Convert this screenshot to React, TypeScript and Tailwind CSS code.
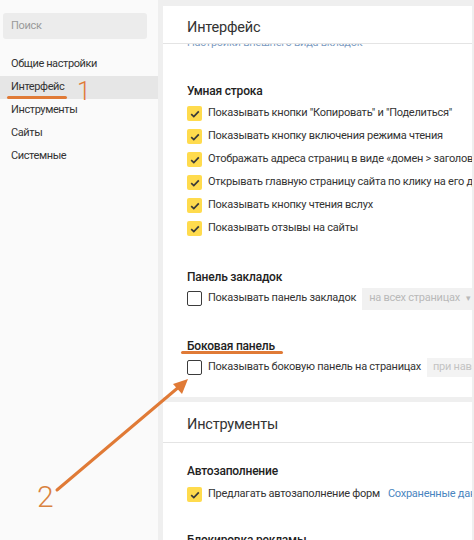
import React from "react";

const font = { fontFamily: 'Roboto, "Noto Sans", sans-serif' };

function Check({ on }: { on: boolean }) {
  if (on)
    return (
      <span className="flex h-[15px] w-[15px] shrink-0 items-center justify-center rounded-[2px] bg-[#ffdb4d]">
        <svg width="10" height="8" viewBox="0 0 10 8">
          <path d="M1.2 4.2 L3.8 6.6 L8.8 1.4" fill="none" stroke="#3a3a3a" strokeWidth="1.7" />
        </svg>
      </span>
    );
  return <span className="h-[15px] w-[15px] shrink-0 rounded-[2px] border-[1.5px] border-[#3b3b3b] bg-white" />;
}

function Row({ on, text, children }: { on: boolean; text: string; children?: React.ReactNode }) {
  return (
    <div className="flex h-[23px] items-center whitespace-nowrap">
      <Check on={on} />
      <span className="ml-[6px] text-[11px] tracking-[-0.25px] text-[#333]">{text}</span>
      {children}
    </div>
  );
}

function SectionTitle({ children, className }: { children: React.ReactNode; className?: string }) {
  return (
    <div
      className={
        "h-[20px] whitespace-nowrap text-[12px] font-medium leading-[20px] tracking-[-0.2px] text-[#222] " + (className || "")
      }
    >
      {children}
    </div>
  );
}

export default function App() {
  const rows = [
    'Показывать кнопки "Копировать" и "Поделиться"',
    "Показывать кнопку включения режима чтения",
    "Отображать адреса страниц в виде «домен > заголовок»",
    "Открывать главную страницу сайта по клику на его домен",
    "Показывать кнопку чтения вслух",
    "Показывать отзывы на сайты",
  ];
  const nav = ["Общие настройки", "Интерфейс", "Инструменты", "Сайты", "Системные"];
  return (
    <div className="relative flex h-[540px] w-[474px] overflow-hidden bg-[#efefef]" style={font}>
      {/* Sidebar */}
      <div className="w-[158px] shrink-0 bg-[#fafafa]">
        <div className="mx-[3px] mt-[13px] flex h-[26px] w-[144px] items-center rounded-[3px] bg-[#ececec] pl-[8px] text-[11px] tracking-[-0.3px] text-[#9a9a9a]">
          Поиск
        </div>
        <div className="mt-[14px] flex flex-col">
          {nav.map((n, i) => (
            <div
              key={n}
              className={
                "flex h-[23px] items-center pl-[11px] text-[11px] tracking-[-0.4px] text-[#333] " +
                (i === 1 ? "bg-[#e6e6e6]" : "")
              }
            >
              {n}
            </div>
          ))}
        </div>
      </div>

      {/* Main */}
      <div className="flex min-w-0 flex-1 flex-col pl-[5px] pr-[2px] pt-[6px]">
        <div className="h-[391px] shrink-0 overflow-hidden bg-white">
          <div className="flex h-[38px] items-center border-b border-[#e4e4e4] pl-[24px] pt-[7px] text-[14.5px] tracking-[-0.2px] text-[#333]">
            Интерфейс
          </div>
          <div className="relative h-[6px] overflow-hidden pl-[24px]">
            <div className="-mt-[8px] whitespace-nowrap text-[11px] leading-[14px] tracking-[-0.25px] text-[#7d9cc2]">
              Настройки внешнего вида вкладок
            </div>
          </div>
          <div className="pl-[24px]">
            <SectionTitle className="mt-[31px]">Умная строка</SectionTitle>
            <div className="mt-[1px]">
              {rows.map((r) => (
                <Row key={r} on text={r} />
              ))}
            </div>
            <SectionTitle className="mt-[27px]">Панель закладок</SectionTitle>
            <Row on={false} text="Показывать панель закладок">
              <span className="ml-[6px] flex h-[22px] items-center bg-[#f1f1f1] pl-[7px] pr-[8px] text-[11px] tracking-[-0.25px] text-[#b9b9b9]">
                на всех страницах <span className="ml-[6px] text-[9px]">▾</span>
              </span>
            </Row>
            <SectionTitle className="mt-[26px]">Боковая панель</SectionTitle>
            <Row on={false} text="Показывать боковую панель на страницах">
              <span className="ml-[6px] flex h-[19px] items-center bg-[#f3f3f3] pl-[6px] pr-[8px] text-[11px] tracking-[-0.25px] text-[#c3c3c3]">
                при наведении
              </span>
            </Row>
          </div>
        </div>

        <div className="mt-[5px] flex-1 overflow-hidden bg-white">
          <div className="flex h-[41px] items-center border-b border-[#e4e4e4] pl-[24px] pt-[6px] text-[14.5px] tracking-[-0.2px] text-[#333]">
            Инструменты
          </div>
          <div className="pl-[24px]">
            <SectionTitle className="mt-[18px]">Автозаполнение</SectionTitle>
            <div className="mt-[2px]">
              <Row on text="Предлагать автозаполнение форм">
                <span className="ml-[8px] text-[11px] tracking-[-0.25px] text-[#4a85c0]">Сохраненные данные</span>
              </Row>
            </div>
            <SectionTitle className="mt-[24px]">Блокировка рекламы</SectionTitle>
          </div>
        </div>
      </div>

      {/* Annotations */}
      <div className="absolute left-[7px] top-[96px] h-[3px] w-[60px] rounded-full bg-[#e07a36]" />
      <div className="absolute left-[77px] top-[78px] text-[25px] font-light leading-[28px] text-[#e07a36]">1</div>
      <div className="absolute left-[181px] top-[351px] h-[3px] w-[102px] rounded-full bg-[#e07a36]" />
      <svg className="absolute left-0 top-0" width="474" height="540" viewBox="0 0 474 540">
        <line x1="57" y1="490" x2="180" y2="386" stroke="#e07a36" strokeWidth="3" strokeLinecap="round" />
        <polygon points="188,379 173,384 182,394" fill="#e07a36" />
      </svg>
      <div className="absolute left-[37px] top-[481px] text-[30px] font-light leading-[32px] text-[#d98240]">2</div>
    </div>
  );
}
